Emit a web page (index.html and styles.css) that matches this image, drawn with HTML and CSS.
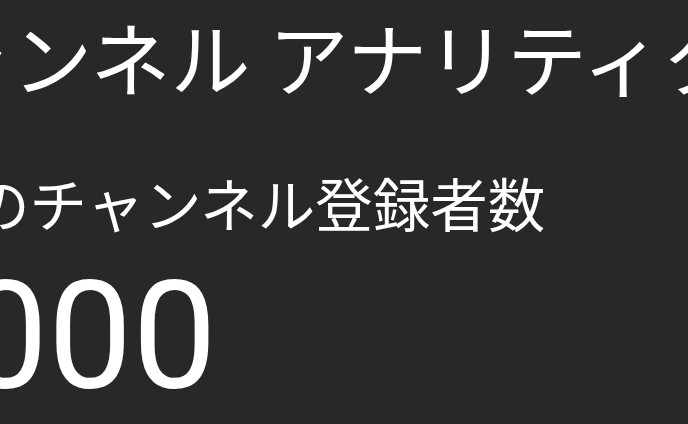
FILE: index.html
```html
<!DOCTYPE html>
<html lang="ja">
<head>
<meta charset="utf-8">
<title>チャンネル アナリティクス</title>
<link rel="stylesheet" href="styles.css">
</head>
<body>
<main class="page">
  <h1 class="title">チャンネル アナリティクス</h1>
  <section class="card">
    <h2 class="label">現在のチャンネル登録者数</h2>
    <div class="value">1,000</div>
  </section>
</main>
</body>
</html>
```
FILE: styles.css
```css
html, body {
  margin: 0;
  padding: 0;
  background: #282828;
  overflow: hidden;
}
body {
  width: 688px;
  height: 424px;
  color: #ffffff;
  font-family: Roboto, "Noto Sans CJK JP", sans-serif;
}
.page {
  display: flex;
  flex-direction: column;
  padding-top: 15px;
}
.title {
  margin: 0 0 0 -147px;
  font-family: "Noto Sans CJK JP", sans-serif;
  font-weight: 400;
  font-size: 80px;
  line-height: 1;
  white-space: nowrap;
}
.card {
  display: flex;
  flex-direction: column;
  margin-top: 79px;
}
.label {
  margin: 0 0 0 -143px;
  font-family: "Noto Sans CJK JP", sans-serif;
  font-weight: 400;
  font-size: 57.5px;
  line-height: 1;
  white-space: nowrap;
}
.value {
  margin: 30px 0 0 -150px;
  font-family: Roboto, sans-serif;
  font-weight: 400;
  font-size: 150px;
  line-height: 1;
  white-space: nowrap;
}
```
